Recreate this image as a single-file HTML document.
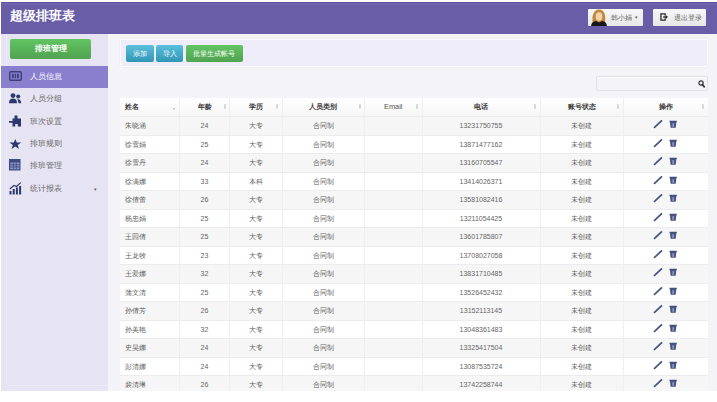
<!DOCTYPE html>
<html><head><meta charset="utf-8">
<style>
*{box-sizing:border-box;margin:0;padding:0}
html,body{width:717px;height:402px;overflow:hidden;background:#fff;font-family:"Liberation Sans",sans-serif}
#hdr{position:absolute;left:1px;top:2px;width:716px;height:31.5px;background:#695da7;border-top:1px solid #5f53a0;box-shadow:inset 0 3px 0 -1px #6e62ae}
#title{position:absolute;left:10px;top:8px;color:#fff;font-size:13px;font-weight:bold;line-height:15px}
.hbtn{position:absolute;top:8.6px;height:17.8px;background:linear-gradient(#f8f8f8,#e6e6e6);border-radius:1px;font-size:6.8px;color:#666;line-height:17.8px}
.hbtn span{position:absolute;top:0}
.caret{font-size:5px}
#side{position:absolute;left:1px;top:34px;width:106.5px;height:357px;background:#e6e3f3}
#hline{position:absolute;left:1px;top:33.5px;width:716px;height:1.5px;background:#f4f3fb}
#content{position:absolute;left:107.5px;top:34px;width:609.5px;height:357px;background:#f3f3f8}
#gbtn{position:absolute;left:10px;top:39px;width:81px;height:19.5px;background:linear-gradient(#62c462,#51a351);border-radius:2px;color:#fff;font-size:8px;font-weight:bold;text-align:center;line-height:19.5px}
.nav{position:absolute;left:1px;width:106.5px;height:22.3px;font-size:8px;color:#666;line-height:22.3px}
.nav.active{background:#8a7ecf;color:#fff}
.nav span{position:absolute;left:29.2px}
.nav em{position:absolute;left:93px;font-size:5px;font-style:normal}
.nav svg{position:absolute;left:8px;top:5.5px}
.nav:nth-of-type(n){}
#well{position:absolute;left:120px;top:39.3px;width:588px;height:27.5px;background:#efedf9;border:1px solid #fbfbff;border-bottom:1.5px solid #fdfdff;border-radius:2px;box-shadow:0 0 0 0.5px #ebeaf3}
.btn{position:absolute;top:45.4px;height:17px;border-radius:2px;color:#fff;font-size:7px;text-align:center;line-height:17px}
.binfo{background:linear-gradient(#5bbfdd,#2f96b4)}
.bsucc{background:linear-gradient(#62c462,#51a351)}
#search{position:absolute;left:596px;top:75.5px;width:112px;height:15px;background:#f3f3f8;border:1px solid #e2e1ea;border-radius:2px;box-shadow:inset 0 1px 1px #fff}
.thead{position:absolute;left:120px;top:98px;width:588px;height:18px;background:linear-gradient(#fff,#f6f6f6)}
.th{position:absolute;top:98px;height:18px;font-size:7.4px;font-weight:bold;color:#3a3a3a;line-height:18px;padding:0 5px}
.tr{position:absolute;left:120px;width:588px;height:18.5px;border-top:1px solid #ececef}
.td{position:absolute;height:18.5px;font-size:6.6px;color:#5e5e5e;line-height:19px;padding:0 5px}
.td.num{font-size:7px;color:#666}
.vl{position:absolute;top:98px;width:1px;height:293px;background:#efeff3}
.ico{position:absolute;width:26px;height:10px;line-height:0}
#bot{position:absolute;left:0;top:391px;width:717px;height:11px;background:#fff}
.th .sort{position:absolute;right:4px;top:6.3px;width:2px;height:5px;background:#d6d6d6;border-radius:1px}
.th .sort1{position:absolute;right:4.5px;top:9.6px;width:0;height:0;border-left:1.5px solid transparent;border-right:1.5px solid transparent;border-top:2.2px solid #aaa}

</style></head><body>
<div id="hdr"></div>
<div id="title">超级排班表</div>
<div class="hbtn" style="left:588.2px;width:54.8px"><svg style="position:absolute;left:1.5px;top:0.5px" width="18" height="17" viewBox="0 0 18 17"><path d="M3 15 Q1.5 9 3.5 4.5 Q5.5 0.5 9 0.6 Q12.8 0.6 14.5 4.5 Q16 9 14.5 15Z" fill="#c08a3c"/><ellipse cx="9" cy="7.6" rx="3.3" ry="4.3" fill="#f3d3ae"/><path d="M1 17 Q1.5 12.5 6 12 L9 13.5 L12 12 Q16.5 12.5 17 17Z" fill="#161616"/></svg><span class="ht" style="left:22.6px">韩小娟</span><span class="caret" style="left:46.5px">▾</span></div>
<div class="hbtn" style="left:653.4px;width:52.6px"><svg style="position:absolute;left:6.8px;top:4.2px" width="8" height="8" viewBox="0 0 8 8"><path d="M0.3 0.3h5.5v2.2h-1.4v-1h-2.8v5h2.8v-1h1.4v2.2h-5.5z" fill="#2a2a2a"/><path d="M3.2 3.2h2.4v-1.5l2.3 2.3-2.3 2.3v-1.5h-2.4z" fill="#2a2a2a"/></svg><span class="ht" style="left:20.4px">退出登录</span></div>
<div id="hline"></div>
<div id="side"><i style="position:absolute;left:5px;top:0;width:1px;height:351px;background:#ecebf7"></i><i style="position:absolute;left:5px;top:351px;width:101.5px;height:1px;background:#ecebf7"></i></div>
<div id="content"></div>
<div id="gbtn">排班管理</div>
<div class="nav active" style="top:66.0px"><svg style="top:5.0px" width="13" height="10" viewBox="0 0 13 10"><rect x="0.7" y="0.7" width="11.6" height="8.6" rx="1.2" fill="none" stroke="#3a3f78" stroke-width="1.4"/><rect x="3" y="2.8" width="1.8" height="4.4" fill="#3a3f78"/><rect x="5.8" y="2.8" width="1.3" height="4.4" fill="#3a3f78"/><rect x="8.1" y="2.8" width="1.8" height="4.4" fill="#3a3f78"/></svg><span>人员信息</span></div>
<div class="nav" style="top:88.3px"><svg style="top:4.8px" width="13" height="11" viewBox="0 0 13 11"><circle cx="4" cy="2.6" r="2.4" fill="#2c386c"/><path d="M0 10.2 Q0 5.6 4 5.6 Q8 5.6 8 10.2z" fill="#2c386c"/><circle cx="9.2" cy="3.4" r="2" fill="#2c386c"/><path d="M8.6 6.2 Q12 6 12.2 10.2 L9.5 10.2 Q9.3 7.5 8 6.6z" fill="#2c386c"/></svg><span>人员分组</span></div>
<div class="nav" style="top:110.6px"><svg style="top:4.1px" width="13" height="12" viewBox="0 0 13 12"><path d="M5.5 0.5h3v3h3.5v8h-3.2v-2.5h-2.6v2.5h-2.7v-3.7h-3.5v-1.8h3.5v-2.5h2z" fill="#2c386c"/></svg><span>班次设置</span></div>
<div class="nav" style="top:132.9px"><svg style="top:6.0px" width="13" height="10" viewBox="0 0 13 10"><path d="M6.3 0 L7.8 3.6 L12.2 3.6 L8.7 6 L10 10 L6.3 7.6 L2.6 10 L3.9 6 L0.4 3.6 L4.8 3.6Z" fill="#2c386c"/></svg><span>排班规则</span></div>
<div class="nav" style="top:155.2px"><svg style="top:4.2px" width="13" height="12" viewBox="0 0 13 12"><rect x="0" y="0" width="11.5" height="11.5" fill="#3e4a80"/><rect x="1.3" y="3.5" width="9" height="6.8" fill="#8f98c4"/><path d="M1.3 5.8h9M1.3 8h9M4.3 3.5v6.8M7.3 3.5v6.8" stroke="#3e4a80" stroke-width="0.8"/></svg><span>排班管理</span></div>
<div class="nav" style="top:177.5px"><svg style="top:4.0px" width="13" height="13" viewBox="0 0 13 13"><path d="M0.5 9h2v3.5h-2z M3.7 7h2v5.5h-2z M6.9 5.5h2v7h-2z M10.1 4h2v8.5h-2z" fill="#2c386c"/><path d="M0.8 7 L5 3.5 L7.5 4.5 L11.8 0.6" stroke="#2c386c" stroke-width="1.1" fill="none"/></svg><span>统计报表</span><em>▾</em></div>
<div id="well"></div>
<div class="btn binfo" style="left:126px;width:27.5px">添加</div>
<div class="btn binfo" style="left:156.3px;width:27.2px">导入</div>
<div class="btn bsucc" style="left:185.6px;width:57.7px">批量生成帐号</div>
<div id="search"><svg style="position:absolute;right:2px;top:3.1px" width="7" height="8" viewBox="0 0 7 8"><circle cx="3" cy="3" r="2.1" fill="none" stroke="#3a3a3a" stroke-width="1.3"/><path d="M4.4 4.6 L6.3 6.9" stroke="#3a3a3a" stroke-width="1.7" stroke-linecap="round"/></svg></div>
<div id="clip"></div>
<div class="thead"></div>
<div class="tr" style="top:116.0px;background:#f6f6f6"></div>
<div class="tr" style="top:134.5px;background:#ffffff"></div>
<div class="tr" style="top:153.0px;background:#f6f6f6"></div>
<div class="tr" style="top:171.5px;background:#ffffff"></div>
<div class="tr" style="top:190.0px;background:#f6f6f6"></div>
<div class="tr" style="top:208.5px;background:#ffffff"></div>
<div class="tr" style="top:227.0px;background:#f6f6f6"></div>
<div class="tr" style="top:245.5px;background:#ffffff"></div>
<div class="tr" style="top:264.0px;background:#f6f6f6"></div>
<div class="tr" style="top:282.5px;background:#ffffff"></div>
<div class="tr" style="top:301.0px;background:#f6f6f6"></div>
<div class="tr" style="top:319.5px;background:#ffffff"></div>
<div class="tr" style="top:338.0px;background:#f6f6f6"></div>
<div class="tr" style="top:356.5px;background:#ffffff"></div>
<div class="tr" style="top:375.0px;background:#f6f6f6"></div>
<div class="vl" style="left:179.0px"></div>
<div class="vl" style="left:229.0px"></div>
<div class="vl" style="left:281.5px"></div>
<div class="vl" style="left:364.0px"></div>
<div class="vl" style="left:421.5px"></div>
<div class="vl" style="left:539.5px"></div>
<div class="vl" style="left:622.5px"></div>
<div class="th" style="left:120px;width:59.5px;text-align:left">姓名<i class="sort1"></i></div>
<div class="th" style="left:179.5px;width:50.0px;text-align:center">年龄<i class="sort"></i></div>
<div class="th" style="left:229.5px;width:52.5px;text-align:center">学历<i class="sort"></i></div>
<div class="th" style="left:282px;width:82.5px;text-align:center">人员类别<i class="sort"></i></div>
<div class="th" style="left:364.5px;width:57.5px;text-align:center;font-weight:normal;color:#555">Email<i class="sort"></i></div>
<div class="th" style="left:422px;width:118px;text-align:center">电话<i class="sort"></i></div>
<div class="th" style="left:540px;width:83px;text-align:center">账号状态<i class="sort"></i></div>
<div class="th" style="left:623px;width:85px;text-align:center">操作<i class="sort"></i></div>
<div class="td" style="left:120px;top:116.0px;width:59.5px;text-align:left">朱晓涵</div>
<div class="td num" style="left:179.5px;top:116.0px;width:50.0px;text-align:center">24</div>
<div class="td" style="left:229.5px;top:116.0px;width:52.5px;text-align:center">大专</div>
<div class="td" style="left:282px;top:116.0px;width:82.5px;text-align:center">合同制</div>
<div class="td num" style="left:422px;top:116.0px;width:118px;text-align:center">13231750755</div>
<div class="td" style="left:540px;top:116.0px;width:83px;text-align:center">未创建</div>
<div class="ico" style="left:653px;top:120.3px"><svg class="ico" width="26" height="10" viewBox="0 0 26 10"><path d="M1.6 7.4 L8.4 0.9" stroke="#45527f" stroke-width="1.7" stroke-linecap="square"/><path d="M16.5 0.7h7.3v1.6h-7.3z M17 2.3h6.3l-0.6 5.4h-5.1z" fill="#45527f"/><path d="M19.3 3.1h1.8v3.8h-1.8z" fill="#8a96c6"/></svg></div>
<div class="td" style="left:120px;top:134.5px;width:59.5px;text-align:left">徐雪娟</div>
<div class="td num" style="left:179.5px;top:134.5px;width:50.0px;text-align:center">25</div>
<div class="td" style="left:229.5px;top:134.5px;width:52.5px;text-align:center">大专</div>
<div class="td" style="left:282px;top:134.5px;width:82.5px;text-align:center">合同制</div>
<div class="td num" style="left:422px;top:134.5px;width:118px;text-align:center">13871477162</div>
<div class="td" style="left:540px;top:134.5px;width:83px;text-align:center">未创建</div>
<div class="ico" style="left:653px;top:138.8px"><svg class="ico" width="26" height="10" viewBox="0 0 26 10"><path d="M1.6 7.4 L8.4 0.9" stroke="#45527f" stroke-width="1.7" stroke-linecap="square"/><path d="M16.5 0.7h7.3v1.6h-7.3z M17 2.3h6.3l-0.6 5.4h-5.1z" fill="#45527f"/><path d="M19.3 3.1h1.8v3.8h-1.8z" fill="#8a96c6"/></svg></div>
<div class="td" style="left:120px;top:153.0px;width:59.5px;text-align:left">徐雪丹</div>
<div class="td num" style="left:179.5px;top:153.0px;width:50.0px;text-align:center">24</div>
<div class="td" style="left:229.5px;top:153.0px;width:52.5px;text-align:center">大专</div>
<div class="td" style="left:282px;top:153.0px;width:82.5px;text-align:center">合同制</div>
<div class="td num" style="left:422px;top:153.0px;width:118px;text-align:center">13160705547</div>
<div class="td" style="left:540px;top:153.0px;width:83px;text-align:center">未创建</div>
<div class="ico" style="left:653px;top:157.3px"><svg class="ico" width="26" height="10" viewBox="0 0 26 10"><path d="M1.6 7.4 L8.4 0.9" stroke="#45527f" stroke-width="1.7" stroke-linecap="square"/><path d="M16.5 0.7h7.3v1.6h-7.3z M17 2.3h6.3l-0.6 5.4h-5.1z" fill="#45527f"/><path d="M19.3 3.1h1.8v3.8h-1.8z" fill="#8a96c6"/></svg></div>
<div class="td" style="left:120px;top:171.5px;width:59.5px;text-align:left">徐满娜</div>
<div class="td num" style="left:179.5px;top:171.5px;width:50.0px;text-align:center">33</div>
<div class="td" style="left:229.5px;top:171.5px;width:52.5px;text-align:center">本科</div>
<div class="td" style="left:282px;top:171.5px;width:82.5px;text-align:center">合同制</div>
<div class="td num" style="left:422px;top:171.5px;width:118px;text-align:center">13414026371</div>
<div class="td" style="left:540px;top:171.5px;width:83px;text-align:center">未创建</div>
<div class="ico" style="left:653px;top:175.8px"><svg class="ico" width="26" height="10" viewBox="0 0 26 10"><path d="M1.6 7.4 L8.4 0.9" stroke="#45527f" stroke-width="1.7" stroke-linecap="square"/><path d="M16.5 0.7h7.3v1.6h-7.3z M17 2.3h6.3l-0.6 5.4h-5.1z" fill="#45527f"/><path d="M19.3 3.1h1.8v3.8h-1.8z" fill="#8a96c6"/></svg></div>
<div class="td" style="left:120px;top:190.0px;width:59.5px;text-align:left">徐倩蕾</div>
<div class="td num" style="left:179.5px;top:190.0px;width:50.0px;text-align:center">26</div>
<div class="td" style="left:229.5px;top:190.0px;width:52.5px;text-align:center">大专</div>
<div class="td" style="left:282px;top:190.0px;width:82.5px;text-align:center">合同制</div>
<div class="td num" style="left:422px;top:190.0px;width:118px;text-align:center">13581082416</div>
<div class="td" style="left:540px;top:190.0px;width:83px;text-align:center">未创建</div>
<div class="ico" style="left:653px;top:194.3px"><svg class="ico" width="26" height="10" viewBox="0 0 26 10"><path d="M1.6 7.4 L8.4 0.9" stroke="#45527f" stroke-width="1.7" stroke-linecap="square"/><path d="M16.5 0.7h7.3v1.6h-7.3z M17 2.3h6.3l-0.6 5.4h-5.1z" fill="#45527f"/><path d="M19.3 3.1h1.8v3.8h-1.8z" fill="#8a96c6"/></svg></div>
<div class="td" style="left:120px;top:208.5px;width:59.5px;text-align:left">杨忠娟</div>
<div class="td num" style="left:179.5px;top:208.5px;width:50.0px;text-align:center">25</div>
<div class="td" style="left:229.5px;top:208.5px;width:52.5px;text-align:center">大专</div>
<div class="td" style="left:282px;top:208.5px;width:82.5px;text-align:center">合同制</div>
<div class="td num" style="left:422px;top:208.5px;width:118px;text-align:center">13211054425</div>
<div class="td" style="left:540px;top:208.5px;width:83px;text-align:center">未创建</div>
<div class="ico" style="left:653px;top:212.8px"><svg class="ico" width="26" height="10" viewBox="0 0 26 10"><path d="M1.6 7.4 L8.4 0.9" stroke="#45527f" stroke-width="1.7" stroke-linecap="square"/><path d="M16.5 0.7h7.3v1.6h-7.3z M17 2.3h6.3l-0.6 5.4h-5.1z" fill="#45527f"/><path d="M19.3 3.1h1.8v3.8h-1.8z" fill="#8a96c6"/></svg></div>
<div class="td" style="left:120px;top:227.0px;width:59.5px;text-align:left">王园倩</div>
<div class="td num" style="left:179.5px;top:227.0px;width:50.0px;text-align:center">25</div>
<div class="td" style="left:229.5px;top:227.0px;width:52.5px;text-align:center">大专</div>
<div class="td" style="left:282px;top:227.0px;width:82.5px;text-align:center">合同制</div>
<div class="td num" style="left:422px;top:227.0px;width:118px;text-align:center">13601785807</div>
<div class="td" style="left:540px;top:227.0px;width:83px;text-align:center">未创建</div>
<div class="ico" style="left:653px;top:231.3px"><svg class="ico" width="26" height="10" viewBox="0 0 26 10"><path d="M1.6 7.4 L8.4 0.9" stroke="#45527f" stroke-width="1.7" stroke-linecap="square"/><path d="M16.5 0.7h7.3v1.6h-7.3z M17 2.3h6.3l-0.6 5.4h-5.1z" fill="#45527f"/><path d="M19.3 3.1h1.8v3.8h-1.8z" fill="#8a96c6"/></svg></div>
<div class="td" style="left:120px;top:245.5px;width:59.5px;text-align:left">王龙牧</div>
<div class="td num" style="left:179.5px;top:245.5px;width:50.0px;text-align:center">23</div>
<div class="td" style="left:229.5px;top:245.5px;width:52.5px;text-align:center">大专</div>
<div class="td" style="left:282px;top:245.5px;width:82.5px;text-align:center">合同制</div>
<div class="td num" style="left:422px;top:245.5px;width:118px;text-align:center">13708027058</div>
<div class="td" style="left:540px;top:245.5px;width:83px;text-align:center">未创建</div>
<div class="ico" style="left:653px;top:249.8px"><svg class="ico" width="26" height="10" viewBox="0 0 26 10"><path d="M1.6 7.4 L8.4 0.9" stroke="#45527f" stroke-width="1.7" stroke-linecap="square"/><path d="M16.5 0.7h7.3v1.6h-7.3z M17 2.3h6.3l-0.6 5.4h-5.1z" fill="#45527f"/><path d="M19.3 3.1h1.8v3.8h-1.8z" fill="#8a96c6"/></svg></div>
<div class="td" style="left:120px;top:264.0px;width:59.5px;text-align:left">王爱娜</div>
<div class="td num" style="left:179.5px;top:264.0px;width:50.0px;text-align:center">32</div>
<div class="td" style="left:229.5px;top:264.0px;width:52.5px;text-align:center">大专</div>
<div class="td" style="left:282px;top:264.0px;width:82.5px;text-align:center">合同制</div>
<div class="td num" style="left:422px;top:264.0px;width:118px;text-align:center">13831710485</div>
<div class="td" style="left:540px;top:264.0px;width:83px;text-align:center">未创建</div>
<div class="ico" style="left:653px;top:268.3px"><svg class="ico" width="26" height="10" viewBox="0 0 26 10"><path d="M1.6 7.4 L8.4 0.9" stroke="#45527f" stroke-width="1.7" stroke-linecap="square"/><path d="M16.5 0.7h7.3v1.6h-7.3z M17 2.3h6.3l-0.6 5.4h-5.1z" fill="#45527f"/><path d="M19.3 3.1h1.8v3.8h-1.8z" fill="#8a96c6"/></svg></div>
<div class="td" style="left:120px;top:282.5px;width:59.5px;text-align:left">蒲文清</div>
<div class="td num" style="left:179.5px;top:282.5px;width:50.0px;text-align:center">25</div>
<div class="td" style="left:229.5px;top:282.5px;width:52.5px;text-align:center">大专</div>
<div class="td" style="left:282px;top:282.5px;width:82.5px;text-align:center">合同制</div>
<div class="td num" style="left:422px;top:282.5px;width:118px;text-align:center">13526452432</div>
<div class="td" style="left:540px;top:282.5px;width:83px;text-align:center">未创建</div>
<div class="ico" style="left:653px;top:286.8px"><svg class="ico" width="26" height="10" viewBox="0 0 26 10"><path d="M1.6 7.4 L8.4 0.9" stroke="#45527f" stroke-width="1.7" stroke-linecap="square"/><path d="M16.5 0.7h7.3v1.6h-7.3z M17 2.3h6.3l-0.6 5.4h-5.1z" fill="#45527f"/><path d="M19.3 3.1h1.8v3.8h-1.8z" fill="#8a96c6"/></svg></div>
<div class="td" style="left:120px;top:301.0px;width:59.5px;text-align:left">孙倩芳</div>
<div class="td num" style="left:179.5px;top:301.0px;width:50.0px;text-align:center">26</div>
<div class="td" style="left:229.5px;top:301.0px;width:52.5px;text-align:center">大专</div>
<div class="td" style="left:282px;top:301.0px;width:82.5px;text-align:center">合同制</div>
<div class="td num" style="left:422px;top:301.0px;width:118px;text-align:center">13152113145</div>
<div class="td" style="left:540px;top:301.0px;width:83px;text-align:center">未创建</div>
<div class="ico" style="left:653px;top:305.3px"><svg class="ico" width="26" height="10" viewBox="0 0 26 10"><path d="M1.6 7.4 L8.4 0.9" stroke="#45527f" stroke-width="1.7" stroke-linecap="square"/><path d="M16.5 0.7h7.3v1.6h-7.3z M17 2.3h6.3l-0.6 5.4h-5.1z" fill="#45527f"/><path d="M19.3 3.1h1.8v3.8h-1.8z" fill="#8a96c6"/></svg></div>
<div class="td" style="left:120px;top:319.5px;width:59.5px;text-align:left">孙美艳</div>
<div class="td num" style="left:179.5px;top:319.5px;width:50.0px;text-align:center">32</div>
<div class="td" style="left:229.5px;top:319.5px;width:52.5px;text-align:center">大专</div>
<div class="td" style="left:282px;top:319.5px;width:82.5px;text-align:center">合同制</div>
<div class="td num" style="left:422px;top:319.5px;width:118px;text-align:center">13048361483</div>
<div class="td" style="left:540px;top:319.5px;width:83px;text-align:center">未创建</div>
<div class="ico" style="left:653px;top:323.8px"><svg class="ico" width="26" height="10" viewBox="0 0 26 10"><path d="M1.6 7.4 L8.4 0.9" stroke="#45527f" stroke-width="1.7" stroke-linecap="square"/><path d="M16.5 0.7h7.3v1.6h-7.3z M17 2.3h6.3l-0.6 5.4h-5.1z" fill="#45527f"/><path d="M19.3 3.1h1.8v3.8h-1.8z" fill="#8a96c6"/></svg></div>
<div class="td" style="left:120px;top:338.0px;width:59.5px;text-align:left">史昊娜</div>
<div class="td num" style="left:179.5px;top:338.0px;width:50.0px;text-align:center">24</div>
<div class="td" style="left:229.5px;top:338.0px;width:52.5px;text-align:center">大专</div>
<div class="td" style="left:282px;top:338.0px;width:82.5px;text-align:center">合同制</div>
<div class="td num" style="left:422px;top:338.0px;width:118px;text-align:center">13325417504</div>
<div class="td" style="left:540px;top:338.0px;width:83px;text-align:center">未创建</div>
<div class="ico" style="left:653px;top:342.3px"><svg class="ico" width="26" height="10" viewBox="0 0 26 10"><path d="M1.6 7.4 L8.4 0.9" stroke="#45527f" stroke-width="1.7" stroke-linecap="square"/><path d="M16.5 0.7h7.3v1.6h-7.3z M17 2.3h6.3l-0.6 5.4h-5.1z" fill="#45527f"/><path d="M19.3 3.1h1.8v3.8h-1.8z" fill="#8a96c6"/></svg></div>
<div class="td" style="left:120px;top:356.5px;width:59.5px;text-align:left">彭清娜</div>
<div class="td num" style="left:179.5px;top:356.5px;width:50.0px;text-align:center">24</div>
<div class="td" style="left:229.5px;top:356.5px;width:52.5px;text-align:center">大专</div>
<div class="td" style="left:282px;top:356.5px;width:82.5px;text-align:center">合同制</div>
<div class="td num" style="left:422px;top:356.5px;width:118px;text-align:center">13087535724</div>
<div class="td" style="left:540px;top:356.5px;width:83px;text-align:center">未创建</div>
<div class="ico" style="left:653px;top:360.8px"><svg class="ico" width="26" height="10" viewBox="0 0 26 10"><path d="M1.6 7.4 L8.4 0.9" stroke="#45527f" stroke-width="1.7" stroke-linecap="square"/><path d="M16.5 0.7h7.3v1.6h-7.3z M17 2.3h6.3l-0.6 5.4h-5.1z" fill="#45527f"/><path d="M19.3 3.1h1.8v3.8h-1.8z" fill="#8a96c6"/></svg></div>
<div class="td" style="left:120px;top:375.0px;width:59.5px;text-align:left">裴清琳</div>
<div class="td num" style="left:179.5px;top:375.0px;width:50.0px;text-align:center">26</div>
<div class="td" style="left:229.5px;top:375.0px;width:52.5px;text-align:center">大专</div>
<div class="td" style="left:282px;top:375.0px;width:82.5px;text-align:center">合同制</div>
<div class="td num" style="left:422px;top:375.0px;width:118px;text-align:center">13742258744</div>
<div class="td" style="left:540px;top:375.0px;width:83px;text-align:center">未创建</div>
<div class="ico" style="left:653px;top:379.3px"><svg class="ico" width="26" height="10" viewBox="0 0 26 10"><path d="M1.6 7.4 L8.4 0.9" stroke="#45527f" stroke-width="1.7" stroke-linecap="square"/><path d="M16.5 0.7h7.3v1.6h-7.3z M17 2.3h6.3l-0.6 5.4h-5.1z" fill="#45527f"/><path d="M19.3 3.1h1.8v3.8h-1.8z" fill="#8a96c6"/></svg></div>
<div id="bot"></div>
</body></html>
